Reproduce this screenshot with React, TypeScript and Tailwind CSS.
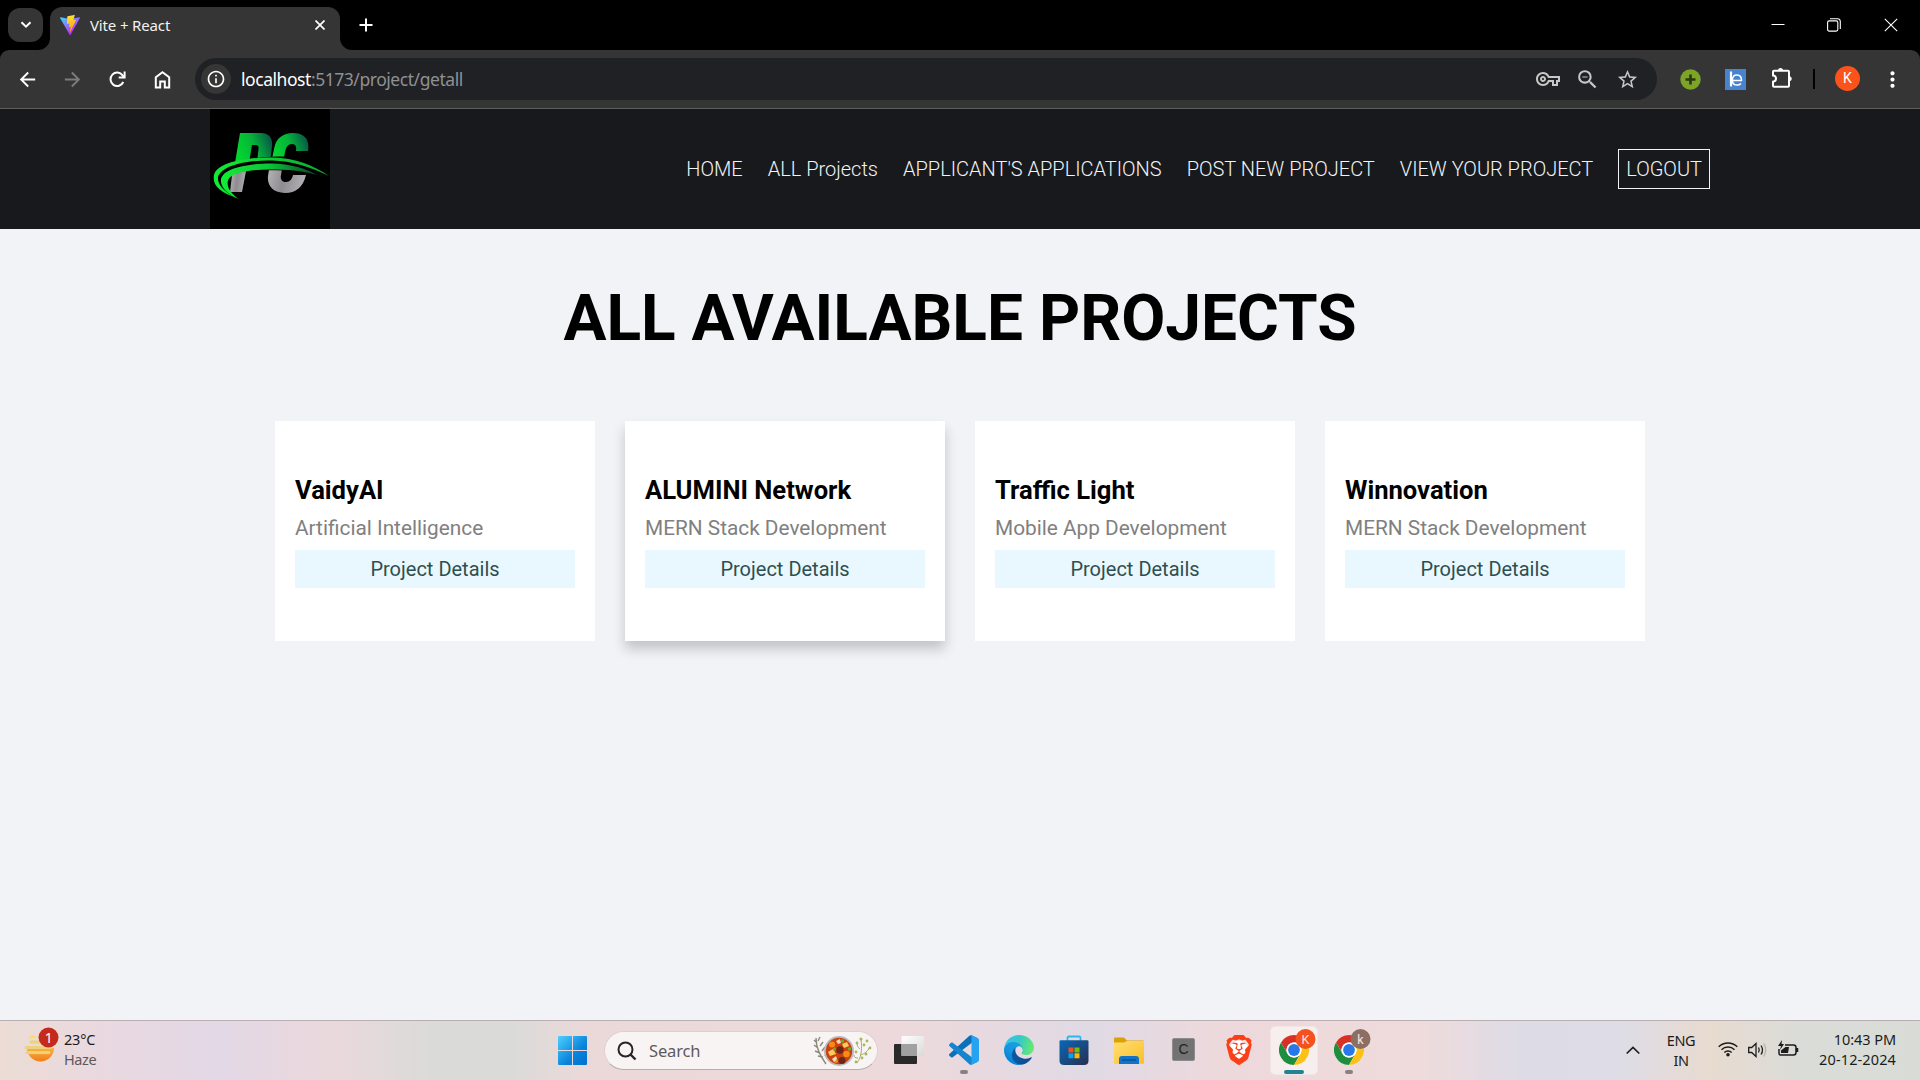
import React from "react";
import {
  MdArrowBack,
  MdArrowForward,
  MdInfoOutline,
  MdOutlineVpnKey,
  MdZoomOut,
  MdStarBorder,
  MdMoreVert,
} from "react-icons/md";
import { SiBrave } from "react-icons/si";

const segoe = "font-['Noto_Sans','Open_Sans',sans-serif]";

function ViteLogo() {
  return (
    <svg width="20" height="20" viewBox="0 0 256 257" preserveAspectRatio="none">
      <defs>
        <linearGradient id="viteA" x1="0" x2="0.58" y1="0.08" y2="0.8">
          <stop offset="0" stopColor="#41D1FF" />
          <stop offset="1" stopColor="#BD34FE" />
        </linearGradient>
        <linearGradient id="viteB" x1="0.43" x2="0.5" y1="0.02" y2="0.9">
          <stop offset="0" stopColor="#FFEA83" />
          <stop offset="0.08" stopColor="#FFDD35" />
          <stop offset="1" stopColor="#FFA800" />
        </linearGradient>
      </defs>
      <path fill="url(#viteA)" d="M255.153 37.938 134.897 252.976c-2.483 4.44-8.862 4.466-11.382.048L.875 37.958c-2.746-4.814 1.371-10.646 6.827-9.67l120.385 21.517a6.537 6.537 0 0 0 2.322-.004l117.867-21.483c5.438-.991 9.574 4.796 6.877 9.62Z" />
      <path fill="url(#viteB)" d="M185.432.063 96.44 17.501a3.268 3.268 0 0 0-2.634 3.014l-5.474 92.456a3.268 3.268 0 0 0 3.997 3.378l24.777-5.718c2.318-.535 4.413 1.507 3.936 3.838l-7.361 36.047c-.495 2.426 1.782 4.5 4.151 3.78l15.304-4.649c2.372-.72 4.652 1.36 4.15 3.788l-11.698 56.621c-.732 3.542 3.979 5.473 5.943 2.437l1.313-2.028 72.516-144.72c1.215-2.423-.88-5.186-3.54-4.672l-25.505 4.922c-2.396.462-4.435-1.77-3.759-4.114l16.646-57.705c.677-2.35-1.37-4.583-3.769-4.113Z" />
    </svg>
  );
}

function TabStrip() {
  return (
    <div className="flex h-[50px] bg-black">
      <div className="mt-2 ml-2 flex h-[34px] w-[35px] items-center justify-center rounded-[12px] bg-[#353535]">
        <svg width="12" height="8" viewBox="0 0 12 8" fill="none" stroke="#fff" strokeWidth="2">
          <path d="M1.5 1.2 6 5.7l4.5-4.5" />
        </svg>
      </div>
      <svg className="mt-[38px] ml-[-5px]" width="12" height="12" viewBox="0 0 12 12">
        <path d="M12 0v12H0A12 12 0 0 0 12 0Z" fill="#353535" />
      </svg>
      <div className="mt-[7px] flex h-[43px] w-[290px] items-center rounded-t-[12px] bg-[#353535] pl-[10px] pb-[7px]">
        <ViteLogo />
        <span className="ml-[10px] w-[90px] text-[15px] tracking-[-0.15px] whitespace-nowrap text-[#f2f2f2]">Vite + React</span>
        <svg className="ml-[135px] shrink-0" width="10" height="10" viewBox="0 0 10 10" stroke="#fff" strokeWidth="1.7">
          <path d="m.5.5 9 9m0-9-9 9" />
        </svg>
      </div>
      <svg className="mt-[38px]" width="12" height="12" viewBox="0 0 12 12">
        <path d="M0 0v12h12A12 12 0 0 1 0 0Z" fill="#353535" />
      </svg>
      <svg className="mt-[18px] ml-[6.5px]" width="14" height="14" viewBox="0 0 14 14" stroke="#fff" strokeWidth="2">
        <path d="M7 .5v13M.5 7h13" />
      </svg>
      <div className="mt-[18px] mr-[22px] ml-auto flex h-[14px] items-start">
        <svg width="14" height="14" viewBox="0 0 14 14" stroke="#fff">
          <path d="M.5 6.500h13" />
        </svg>
        <svg className="ml-[42px]" width="14" height="14" viewBox="0 0 14 14" fill="none" stroke="#fff" strokeWidth="1.1">
          <rect x=".6" y="2.9" width="10.2" height="10.2" rx="1.5" />
          <path d="M3 .7h7.5c1.7 0 2.8 1.1 2.8 2.8v7.5" />
        </svg>
        <svg className="ml-[43px]" width="14" height="14" viewBox="0 0 14 14" stroke="#fff" strokeWidth="1.1">
          <path d="m.8.8 12.4 12.4m0-12.400L.8 13.200" />
        </svg>
      </div>
    </div>
  );
}

function Toolbar() {
  return (
    <div className="bg-black">
      <div className="flex h-[59px] items-center rounded-t-[9px] border-b border-[#5e5e5e] bg-[#353535] text-white">
        <MdArrowBack className="ml-[16px] size-[23px]" />
        <MdArrowForward className="ml-[22px] size-[23px] text-[#7c7c7c]" />
        <svg className="ml-[25px]" width="17" height="17" viewBox="0 0 17 17" fill="none" stroke="#fff" strokeWidth="2">
          <path d="M14.300 11A6.700 6.700 0 1 1 13.600 4.300L15 6" />
          <path d="M15.600.5v6H9.700" />
        </svg>
        <svg className="ml-[28px]" width="17" height="19" viewBox="0 0 17 19" fill="none" stroke="#fff" strokeWidth="2">
          <path d="M1.800 17.500V7.200l6.700-5 6.700 5v10.300h-4.400v-6H6.200v6Z" />
        </svg>
        <div className="ml-[24px] flex h-[42px] w-[1462px] items-center rounded-full bg-[#202124]">
          <div className="ml-[6px] flex size-[30px] items-center justify-center rounded-full bg-[#363636]">
            <MdInfoOutline className="size-[20px]" />
          </div>
          <span className="ml-[10px] text-[17.5px] tracking-[-0.45px] whitespace-nowrap text-[#8f9092]">
            <span className="text-white">localhost</span>:5173/project/getall
          </span>
          <div className="mr-[18px] ml-auto flex items-center text-[#c7c7c7]">
            <MdOutlineVpnKey className="size-[24px]" />
            <MdZoomOut className="mt-[1px] ml-[15px] size-[25px]" />
            <MdStarBorder className="ml-[16px] size-[23px]" />
          </div>
        </div>
        <svg className="ml-[23px]" width="21" height="21" viewBox="0 0 21 21">
          <circle cx="10.5" cy="10.5" r="10.2" fill="#7ba428" />
          <path d="M10.5 5.500v10M5.500 10.500h10" stroke="#2c380f" strokeWidth="2.600" />
        </svg>
        <svg className="ml-[24px]" width="21" height="21" viewBox="0 0 21 21" fill="none">
          <path fill="#4783cf" d="M0 0h21v21H0z" />
          <path d="M6 2.500v15" stroke="#fff" strokeWidth="2.200" />
          <path d="M6 11.500h10.500c0-3.800-2-5.500-4.500-5.500-2.800 0-4.600 2.200-4.600 5.200s1.700 4.900 4.700 4.900c1.800 0 3-.6 3.900-1.600" stroke="#fff" strokeWidth="1.500" />
        </svg>
        <svg className="mt-[-2px] ml-[25px]" width="22" height="22" viewBox="0 0 22 22" fill="none" stroke="#fff" strokeWidth="2">
          <path d="M3 3.700h14q1 0 1 1v14q0 1-1 1H3q-1 0-1-1v-4c4-.3 4-6 0-6.300V4.700q0-1 1-1Z" />
          <path d="M7 3.700a2.500 2.700 0 0 1 5 0ZM18 9.200a2.700 2.500 0 0 1 0 5Z" fill="#fff" stroke="none" />
        </svg>
        <div className="ml-[20px] h-[20px] w-[2px] bg-black" />
        <div className="mt-[-1px] ml-[20px] flex size-[25px] items-center justify-center rounded-full bg-[#fa541c] font-['Roboto',sans-serif] text-[14px]">K</div>
        <MdMoreVert className="ml-[20px] size-[25px]" />
      </div>
    </div>
  );
}

function BrandLogo() {
  return (
    <svg width="120" height="120" viewBox="0 0 120 120">
      <defs>
        <linearGradient id="pGreen" x1="0" x2="1" y1="0.3" y2="0">
          <stop offset="0" stopColor="#02d42f" />
          <stop offset="0.45" stopColor="#06b23a" />
          <stop offset="1" stopColor="#07484a" />
        </linearGradient>
        <linearGradient id="swoosh" x1="0" x2="1" y1="0" y2="0">
          <stop offset="0" stopColor="#10ed35" />
          <stop offset="0.5" stopColor="#0cc636" />
          <stop offset="1" stopColor="#063f2d" />
        </linearGradient>
        <linearGradient id="outer" x1="0" x2="1" y1="0" y2="0">
          <stop offset="0" stopColor="#10ed35" />
          <stop offset="1" stopColor="#0da832" />
        </linearGradient>
        <linearGradient id="silver" x1="0" x2="1" y1="0" y2="0.2">
          <stop offset="0" stopColor="#b9b7ba" />
          <stop offset="0.5" stopColor="#8e8c90" />
          <stop offset="1" stopColor="#b0aeb2" />
        </linearGradient>
        <clipPath id="top"><path d="M0 0h120v52C88 46 55 46 26 53H0Z" /></clipPath>
        <clipPath id="bottom"><path d="M0 67C32 61 70 58 120 67v53H0Z" /></clipPath>
      </defs>
      <path d="M0 0h120v120H0z" />
      <g clipPath="url(#top)">
        <path fill="url(#pGreen)" d="M30 24h21c8 0 12 5 11 13l-2 17H47l1.500-14c.3-3-.5-4-3-4H42l-3 18H25Z" />
        <path fill="url(#pGreen)" d="M98 42H86c1-5-1-7-4-7-4 0-6 3-7 8l-2 12H61l3-15c2-11 9-16 19-16 11 0 17 6 15 18Z" />
      </g>
      <g clipPath="url(#bottom)">
        <path fill="url(#silver)" d="m23 58 14-1-5 26H20Z" />
        <path fill="url(#silver)" d="M60 54h13l-2 12c-1 4 1 7 5 7s6-3 7-7h13c-3 12-10 18-21 18-12 0-18-7-17-17Z" />
      </g>
      <path fill="url(#outer)" d="M28 89C10 84 2 76 4 66 8 52 40 48.500 62 48.500c23 .2 43 8.500 57 18.500C100 58 82 52 62 51.500 38 51 12 56 8 68c-1 8 8 17 20 21Z" />
      <path fill="url(#swoosh)" d="M29 90C16 85 10 77 11 70c3-12 30-15.500 50-15.500 20 .3 36 5.500 46 11.500-15-4.500-30-5.500-47-5.500-19 0-36 3-41 9-4 6 1 15 10 20.500Z" />
    </svg>
  );
}

function SiteNav() {
  const links = ["HOME", "ALL Projects", "APPLICANT'S APPLICATIONS", "POST NEW PROJECT", "VIEW YOUR PROJECT"];
  return (
    <nav className="h-[120px] bg-[#18191c]">
      <div className="mx-auto flex h-full w-[1500px] items-center justify-between">
        <BrandLogo />
        <ul className="flex items-center gap-[25px] text-[20px] font-light text-[#f1f3f8]">
          {links.map((l) => (
            <li key={l} className="whitespace-nowrap">{l}</li>
          ))}
          <li>
            <button className="block h-[40px] border border-[#f1f3f8] px-[7px] font-light">LOGOUT</button>
          </li>
        </ul>
      </div>
    </nav>
  );
}

const projects = [
  { title: "VaidyAI", category: "Artificial Intelligence" },
  { title: "ALUMINI Network", category: "MERN Stack Development", raised: true },
  { title: "Traffic Light", category: "Mobile App Development" },
  { title: "Winnovation", category: "MERN Stack Development" },
];

function Projects() {
  return (
    <main className="h-[791px] bg-[#f1f3f7] pt-[51px]">
      <h1 className="text-center text-[64px] leading-[77px] font-bold text-black">ALL AVAILABLE PROJECTS</h1>
      <div className="mx-auto mt-[64px] grid w-[1370px] grid-cols-4 gap-[30px]">
        {projects.map((p) => (
          <article
            key={p.title}
            className={
              p.raised
                ? "flex h-[220px] flex-col justify-center bg-white px-5 shadow-[0_8px_12px_rgba(0,0,0,0.2)]"
                : "flex h-[220px] flex-col justify-center bg-white px-5"
            }
          >
            <h2 className="text-[25.6px] leading-[33px] font-bold text-black">{p.title}</h2>
            <p className="mt-[9px] text-[20.8px] leading-[25px] text-[#808080]">{p.category}</p>
            <a className="mt-[9px] block h-[38px] bg-[#e9f8ff] text-center text-[20px] leading-[38px] text-[#2f4f4f]">Project Details</a>
          </article>
        ))}
      </div>
    </main>
  );
}

function WeatherIcon() {
  return (
    <svg width="36" height="38" viewBox="0 0 36 38">
      <defs>
        <linearGradient id="sun" x1="0" x2="0" y1="0" y2="1">
          <stop offset="0" stopColor="#f9b43a" />
          <stop offset="1" stopColor="#ef7d1d" />
        </linearGradient>
      </defs>
      <path fill="url(#sun)" d="M3 21h27a13.500 13.500 0 0 1-27 0Z" />
      <g stroke="#ecd27c" strokeWidth="3" strokeLinecap="round">
        <path d="M7 15h12M2 20.500h16M18 20.500h8M3 25.500h22" />
        <path d="M7 10h4" stroke="#fadd70" />
      </g>
      <circle cx="24.500" cy="10.500" r="10" fill="#c42b1c" />
      <text x="24.800" y="15.500" textAnchor="middle" fontSize="14" fill="#fff" fontFamily="Noto Sans">1</text>
    </svg>
  );
}

function SearchArt() {
  return (
    <svg width="60" height="32" viewBox="0 0 60 32" fill="none">
      <path stroke="#8b897a" strokeWidth="1.400" d="M3 3c0 10 4 17 10 26M4 8 1 5m4 8-4-3m6 8-5-2m8 6-5-1m0-15 2-4m0 9 3-4m-1 9 3-4m0 9 2-4" />
      <path stroke="#a3ad72" strokeWidth="1" d="M44 28c5-7 5-15 4-24m-1 16c5-1 8-4 9-7m-9 1c-2-2-3-3-3-6m1 15c-3 0-4-1-4-3" />
      <g fill="#a9b75b">
        <circle cx="48" cy="4" r="1.600" /><circle cx="44" cy="8" r="1.400" /><circle cx="54" cy="6" r="1.400" />
        <circle cx="51" cy="10" r="1.400" /><circle cx="57" cy="13" r="1.400" /><circle cx="43" cy="17" r="1.400" />
        <circle cx="53" cy="19" r="1.500" /><circle cx="43" cy="27" r="1.400" /><circle cx="49" cy="23" r="1.400" />
      </g>
      <circle cx="26" cy="16" r="15" fill="#b9bbbf" />
      <circle cx="26" cy="16" r="13.200" fill="#c8430e" />
      <g fill="#f98a16"><circle cx="19" cy="9.500" r="3" /><circle cx="33.500" cy="19" r="3.300" /><circle cx="23" cy="26" r="2" /></g>
      <g fill="#fbcb62"><path d="m15 17 5-3 3 5-6 2Z" /><path d="m29 9 5-2 2 4-5 2Z" /></g>
      <path fill="#eadbc5" d="m23 6 4-2 1 4-3 1Zm-4 18 4-3 1 3-3 3Z" />
      <g fill="#6d2719"><circle cx="27" cy="15" r="3.700" /><circle cx="29" cy="25.500" r="3.500" /></g>
      <g fill="#78aa26"><circle cx="29.500" cy="6" r="1.700" /><circle cx="36.500" cy="14" r="1.700" /><circle cx="21.500" cy="14" r="1.500" /></g>
    </svg>
  );
}

function WindowsLogo() {
  return (
    <svg width="29" height="29" viewBox="0 0 29 29">
      <defs>
        <linearGradient id="win" x1="0" x2="1" y1="0" y2="1">
          <stop offset="0" stopColor="#4dd0ff" />
          <stop offset="0.6" stopColor="#0a84dc" />
          <stop offset="1" stopColor="#0070cc" />
        </linearGradient>
      </defs>
      <path fill="url(#win)" d="M0 1a1 1 0 0 1 1-1h13v14H0ZM15 0h13a1 1 0 0 1 1 1v13H15ZM0 15h14v14H1a1 1 0 0 1-1-1ZM15 15h14v13a1 1 0 0 1-1 1H15Z" />
    </svg>
  );
}

function TaskView() {
  return (
    <svg width="30" height="28" viewBox="0 0 30 28">
      <defs>
        <linearGradient id="tv" x1="0" x2="1" y1="0" y2="1">
          <stop offset="0" stopColor="#fff" />
          <stop offset="1" stopColor="#d9d9d9" />
        </linearGradient>
      </defs>
      <rect y="8" width="23" height="20" rx="1" fill="#2a2a2a" />
      <rect x="7.500" width="22.500" height="20" rx="1" fill="url(#tv)" />
      <path fill="#a1a1a1" d="M7.500 8H23v12H7.500z" />
    </svg>
  );
}

function VsCode() {
  return (
    <svg width="30" height="30" viewBox="0 0 100 100">
      <path fill="#0a70b9" d="m96 11-21-10c-2.500-1-5-.5-7 1.500L1.300 63c-1.700 1.600-1.700 4.300 0 5.900L7 74c1.500 1.400 3.800 1.500 5.400.3L93 13.500Z" />
      <path fill="#1485ce" d="M96 89 75 99c-2.500 1-5 .5-7-1.500L1.300 37c-1.700-1.600-1.700-4.300 0-5.900L7 26c1.500-1.400 3.800-1.500 5.400-.3L93 86.500Z" />
      <path fill="#25a2f0" d="M75 99c-2.500 1-5.300.5-7.200-1.500C70 100 75 98 75 94V6c0-4-5-6-7.200-3.500C69.700.5 72.500 0 75 1l21 10c2.500 1 4 3.500 4 6v66c0 2.500-1.500 5-4 6Z" />
    </svg>
  );
}

function Edge() {
  return (
    <svg width="30" height="30" viewBox="0 0 256 256">
      <defs>
        <linearGradient id="edA" x1="0" x2="1" y1="0.5" y2="0.5"><stop offset="0" stopColor="#0c59a4" /><stop offset="1" stopColor="#114a8b" /></linearGradient>
        <linearGradient id="edB" x1="0.7" x2="0.2" y1="0.2" y2="1"><stop offset="0" stopColor="#1b9de2" /><stop offset="0.4" stopColor="#1595df" /><stop offset="1" stopColor="#0078d4" /></linearGradient>
        <linearGradient id="edC" x1="0" x2="1" y1="0.3" y2="0.5"><stop offset="0" stopColor="#35c1f1" /><stop offset="0.5" stopColor="#36c9c6" /><stop offset="1" stopColor="#66eb6e" /></linearGradient>
      </defs>
      <path fill="url(#edA)" d="M231 190.500c-3.400 1.800-6.900 3.400-10.500 4.700-11.500 4.300-23.600 6.500-35.900 6.500-47.300 0-88.500-32.500-88.500-74.300.1-11.400 6.400-21.900 16.400-27.300-42.800 1.800-53.800 46.400-53.800 72.500 0 73.900 68.100 81.400 82.800 81.400 7.900 0 19.800-2.300 27-4.600l1.300-.4c27.600-9.500 51-28.100 66.600-52.800 1.200-1.900.6-4.300-1.200-5.500-1.300-.8-2.900-.9-4.200-.2Z" />
      <path fill="url(#edB)" d="M105.700 241.400c-8.900-5.500-16.600-12.800-22.700-21.300-26.300-36-18.400-86.500 17.600-112.800 3.800-2.700 7.700-5.200 11.900-7.200 3.100-1.500 8.400-4.100 15.500-4 10.100.1 19.600 4.900 25.700 13 4 5.400 6.300 11.900 6.400 18.700 0-.2 24.500-79.600-80-79.600-43.900 0-80 41.700-80 78.200-.2 19.300 4 38.500 12.100 56 27.600 58.800 94.800 87.600 156.400 67.100-21.100 6.600-44.100 3.700-62.900-8.100Z" />
      <path fill="url(#edC)" d="M152.300 148.900c-.8 1-3.300 2.500-3.300 5.700 0 2.600 1.700 5.100 4.700 7.200 14.400 10 41.500 8.700 41.600 8.700 10.700 0 21.100-2.900 30.300-8.300 18.800-11 30.400-31.100 30.400-52.900.3-22.400-8-37.300-11.300-43.900C223.500 23.900 177.700 0 128 0 58 0 1 56.200 0 126.200c.5-36.500 36.800-66 80-66 3.500 0 23.500.3 42 10.100 16.300 8.600 24.900 18.900 30.800 29.200 6.200 10.700 7.300 24.100 7.300 29.500 0 5.300-2.700 13.300-7.800 19.900Z" />
    </svg>
  );
}

function Store() {
  return (
    <svg width="30" height="30" viewBox="0 0 30 30">
      <defs>
        <linearGradient id="store" x1="0" x2="1" y1="0" y2="1"><stop offset="0" stopColor="#0868b7" /><stop offset="1" stopColor="#292e50" /></linearGradient>
      </defs>
      <path fill="none" stroke="#30b5ed" strokeWidth="1.800" d="M8.500 6V3q0-1.500 1.500-1.500h10q1.500 0 1.500 1.500v3" />
      <path fill="url(#store)" d="M.5 6.500Q.5 5.300 1.700 5.300h26.600q1.200 0 1.200 1.200v19q0 4.500-4.500 4.500H5Q.5 30 .5 25.500Z" />
      <path fill="#f25022" d="M9.500 12.500h5v5h-5z" /><path fill="#7fba00" d="M15.500 12.500h5v5h-5z" />
      <path fill="#00a4ef" d="M9.500 18.300h5v5h-5z" /><path fill="#ffb900" d="M15.500 18.300h5v5h-5z" />
    </svg>
  );
}

function Folder() {
  return (
    <svg width="30" height="27" viewBox="0 0 30 27">
      <defs>
        <linearGradient id="fold" x1="0" x2="1" y1="0" y2="1"><stop offset="0" stopColor="#ffdf70" /><stop offset="1" stopColor="#fabf2a" /></linearGradient>
      </defs>
      <path fill="#dfa007" d="M0 1.500Q0 .5 1 .5h9l3 3h16q1 0 1 1V8H0Z" />
      <path fill="url(#fold)" d="M0 5.500h10L13 4h17v22q0 .7-.7.7H.7Q0 26.700 0 26Z" />
      <path fill="#1373c9" d="M5 27v-5q0-3 3-3h14q3 0 3 3v5Z" />
      <path stroke="#0b4b8c" strokeWidth="1.200" d="M8 23h14" />
    </svg>
  );
}

function Chrome({ letter, badge }: { letter: string; badge: string }) {
  return (
    <svg width="37" height="36" viewBox="0 0 37 36">
      <circle cx="15" cy="21" r="15" fill="#fff" />
      <path fill="#d93025" d="M2 13.500A15 15 0 0 1 28 13.500H15a7.500 7.500 0 0 0-6.500 11.250Z" />
      <path fill="#1e8e3e" d="M2 13.500 8.500 24.750A7.500 7.500 0 0 0 21.500 24.750L15 36A15 15 0 0 1 2 13.500Z" />
      <path fill="#fbc116" d="M28 13.500A15 15 0 0 1 15 36l6.500-11.250A7.500 7.500 0 0 0 15 13.500Z" />
      <circle cx="15" cy="21" r="7.500" fill="#fff" />
      <circle cx="15" cy="21" r="5.900" fill="#2978e8" />
      <circle cx="26.500" cy="10" r="10" fill={badge} />
      <text x="26.500" y="14.500" textAnchor="middle" fontSize="12.500" fill="#f6e6e0" fontFamily="Roboto">{letter}</text>
    </svg>
  );
}

function Taskbar() {
  return (
    <footer className="flex h-[60px] border-t border-[#b9afb3] bg-[linear-gradient(90deg,#ecdcd4_0px,#ead9df_90px,#e3d8e6_220px,#ead8dc_330px,#dadbd9_430px,#dadbd9_515px,#ebd9d9_580px,#edd9db_900px,#e0dae5_1090px,#edd9dc_1220px,#efdbdb_1420px,#dddce6_1520px,#dedce6_1620px,#e8dbd0_1710px,#dadcd8_1800px,#d9dcd6_1920px)] text-[#1c1c1c]">
      <div className="ml-[24px] flex w-[518px] pt-[6px]">
        <WeatherIcon />
        <div className="ml-[4px] text-[14.5px] leading-[20px] tracking-[-0.4px]">
          <div className="pt-[2px] tracking-[-0.2px]">23°C</div>
          <div className="text-[#5d585c]">Haze</div>
        </div>
      </div>
      <div className="flex items-start">
        <div className="mt-[15px] ml-[16px]"><WindowsLogo /></div>
        <div className="mt-[10px] ml-[17px] flex h-[39px] w-[274px] items-center rounded-full border border-[#e0cfd2] border-b-[#b9acaf] bg-[#f9f4f4]">
          <svg className="ml-[12px]" width="20" height="20" viewBox="0 0 20 20" fill="none" stroke="#262626" strokeWidth="2">
            <circle cx="8.500" cy="8.500" r="7" />
            <path d="m13.500 13.500 5 5" strokeWidth="2.400" />
          </svg>
          <span className="mt-[1px] ml-[12px] text-[16.5px] tracking-[-0.15px] text-[#5f5b5c]">Search</span>
          <div className="mr-[4px] ml-auto"><SearchArt /></div>
        </div>
        <div className="mt-[15px] ml-[16px]"><TaskView /></div>
        <div className="mt-[14px] ml-[25px] flex w-[30px] flex-col items-center">
          <VsCode />
          <div className="mt-[5px] h-[4px] w-[8px] rounded-full bg-[#8a8083]" />
        </div>
        <div className="mt-[14px] ml-[25px]"><Edge /></div>
        <div className="mt-[14px] ml-[25px]"><Store /></div>
        <div className="mt-[16px] ml-[25px]"><Folder /></div>
        <div className="mt-[17px] ml-[28px] flex size-[23px] items-center justify-center rounded-[2px] border border-[#8c8c8c] bg-[#737373] font-['Liberation_Sans',sans-serif] text-[14px] text-[#222]">C</div>
        <div className="mt-[14px] ml-[31px] flex h-[30px] w-[26px] items-center justify-center bg-[radial-gradient(circle,#fff_0_9px,transparent_10px)]">
          <SiBrave className="size-[30px] shrink-0 text-[#fb3f16]" />
        </div>
        <div className="mt-[5px] ml-[18px] flex h-[49px] w-[48px] flex-col items-center rounded-[5px] border border-[#f1e6e7] bg-[#f7eeee] pt-[2px]">
          <div className="ml-[7px]"><Chrome letter="K" badge="#f4511e" /></div>
          <div className="mt-[5px] h-[4px] w-[20px] shrink-0 rounded-full bg-[#258292]" />
        </div>
        <div className="mt-[8px] ml-[16px] w-[37px]">
          <Chrome letter="k" badge="#8d6e63" />
          <div className="mt-[5px] ml-[11px] h-[4px] w-[8px] rounded-full bg-[#8a8083]" />
        </div>
      </div>
      <div className="mr-[24px] ml-auto flex text-[14.5px] leading-[20px] tracking-[-0.35px]">
        <svg className="mt-[25px]" width="14" height="9" viewBox="0 0 14 9" fill="none" stroke="#1c1c1c" strokeWidth="1.700">
          <path d="m.7 7.500 6.300-6 6.300 6" />
        </svg>
        <div className="ml-[26px] w-[30px] pt-[9px] text-center">ENG<br />IN</div>
        <svg className="mt-[20px] ml-[22px]" width="20" height="16" viewBox="0 0 20 16" fill="none" stroke="#1c1c1c" strokeWidth="1.400">
          <path d="M.7 5.800a13.200 13.200 0 0 1 18.600 0M3.500 8.700a9.200 9.200 0 0 1 13 0M6.300 11.500a5.200 5.200 0 0 1 7.400 0" />
          <circle cx="10" cy="13.700" r="1.800" fill="#1c1c1c" stroke="none" />
        </svg>
        <svg className="mt-[21px] ml-[10px]" width="20" height="16" viewBox="0 0 20 16" fill="none" stroke="#1c1c1c" strokeWidth="1.300">
          <path d="M.7 5.500h3L8 1.500v13l-4.300-4h-3ZM10.500 5.500q1.500 2.500 0 5M13 3.500q3 4.500 0 9" />
          <path d="M15.700 1.500q4 6.500 0 13" stroke="#b8b2ad" />
        </svg>
        <svg className="mt-[19px] ml-[9px]" width="22" height="18" viewBox="0 0 22 18" fill="none" stroke="#1c1c1c" strokeWidth="1.500">
          <path d="M8 5h8.500q2.500 0 2.500 2.500v5q0 2.500-2.500 2.500h-12Q2 15.500 2 13V9" />
          <path d="M20 8v4" strokeWidth="2.500" />
          <path d="M4 13V10.500L8.500 7H12l-1 6Z" fill="#1c1c1c" stroke="none" />
          <path d="M5 0 1 6h3L3 10l4-6H4.500Z" fill="#1c1c1c" stroke="none" />
        </svg>
        <div className="ml-[17px] w-[80px] pt-[8px] text-right whitespace-nowrap">
          <div className="tracking-[-0.05px]">10:43 PM</div>
          <div className="tracking-[0.12px]">20-12-2024</div>
        </div>
      </div>
    </footer>
  );
}

export default function App() {
  return (
    <div className="flex h-[1080px] w-[1920px] flex-col overflow-hidden font-['Roboto',sans-serif]">
      <div className={segoe}>
        <TabStrip />
        <Toolbar />
      </div>
      <SiteNav />
      <Projects />
      <div className={segoe}>
        <Taskbar />
      </div>
    </div>
  );
}
